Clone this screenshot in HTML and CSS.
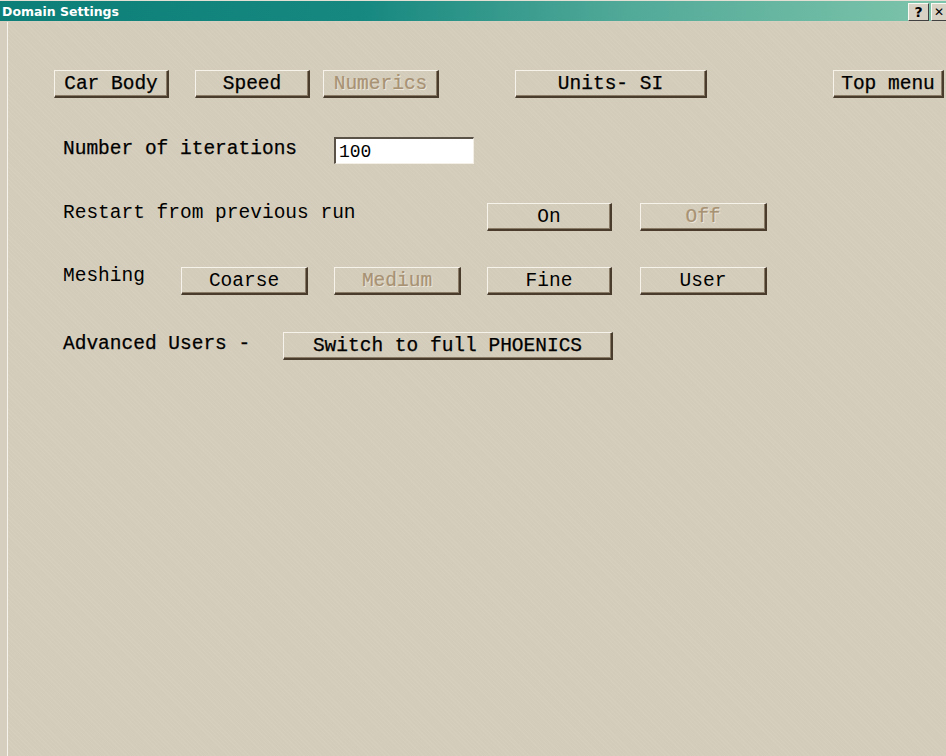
FILE: index.html
```html
<!DOCTYPE html>
<html lang="en">
<head>
<meta charset="utf-8">
<title>Domain Settings</title>
<link rel="stylesheet" href="styles.css">
</head>
<body>
<div class="window">
  <div class="titlebar">
    <span class="title">Domain Settings</span>
    <div class="caption-buttons">
      <span class="cap-btn">?</span>
      <span class="cap-btn cap-close">&#x2715;</span>
    </div>
  </div>
  <div class="client">
    <div class="row row-nav">
      <button class="btn w-car">Car Body</button>
      <button class="btn w-speed">Speed</button>
      <button class="btn w-num" disabled>Numerics</button>
      <button class="btn w-units">Units- SI</button>
      <button class="btn w-top">Top menu</button>
    </div>

    <div class="row row-iter">
      <span class="label l-iter">Number of iterations</span>
      <input class="field" type="text" value="100">
    </div>

    <div class="row row-restart">
      <span class="label light l-restart">Restart from previous run</span>
      <button class="btn light w-on">On</button>
      <button class="btn light w-off" disabled>Off</button>
    </div>

    <div class="row row-mesh">
      <span class="label light l-mesh">Meshing</span>
      <button class="btn light w-coarse">Coarse</button>
      <button class="btn light w-medium" disabled>Medium</button>
      <button class="btn light w-fine">Fine</button>
      <button class="btn light w-user">User</button>
    </div>

    <div class="row row-adv">
      <span class="label l-adv">Advanced Users -</span>
      <button class="btn w-switch">Switch to full PHOENICS</button>
    </div>
  </div>
</div>
</body>
</html>
```

FILE: styles.css
```css
* { box-sizing: border-box; }

html, body {
  margin: 0;
  padding: 0;
  width: 946px;
  height: 756px;
  overflow: hidden;
  background: #d4ccba;
}

.window {
  display: flex;
  flex-direction: column;
  width: 946px;
  height: 756px;
}

/* caption bar */
.titlebar {
  flex: 0 0 22px;
  display: flex;
  align-items: center;
  justify-content: space-between;
  border-top: 1px solid #e4dfd4;
  border-bottom: 1px solid #d6cfbf;
  padding-left: 2px;
  background: linear-gradient(to right, #0c7f78 0%, #168880 38%, #4fa897 65%, #7fc5ab 100%);
}

.title {
  font-family: "DejaVu Sans", "Liberation Sans", sans-serif;
  font-weight: bold;
  font-size: 12.5px;
  color: #ffffff;
}

.caption-buttons {
  display: flex;
  gap: 2px;
  align-self: flex-start;
  margin-top: 2px;
}

.cap-btn {
  flex: 0 0 auto;
  width: 21px;
  height: 18px;
  display: flex;
  align-items: center;
  justify-content: center;
  background: #d8d2c4;
  border-top: 1px solid #fbf9f4;
  border-left: 1px solid #fbf9f4;
  border-right: 1px solid #404040;
  border-bottom: 1px solid #404040;
  font-family: "DejaVu Sans", sans-serif;
  font-weight: bold;
  font-size: 14px;
  color: #000;
}

.cap-close {
  width: 15px;
  font-size: 12px;
  justify-content: flex-start;
  padding-left: 2px;
  border-right: none;
}

/* dialog surface */
.client {
  flex: 1;
  display: flex;
  flex-direction: column;
  padding: 48px 0 0 47px;
  border-left: 7px solid #d6cfbf;
  box-shadow: inset 1px 0 0 #f6f3ec;
  background-color: #d4ccba;
  background-image: repeating-linear-gradient(45deg, rgba(255,255,255,0.05) 0 1px, rgba(0,0,0,0) 1px 3px);
  font-family: "Liberation Mono", "DejaVu Sans Mono", monospace;
  font-size: 19.5px;
  color: #000;
}

.row {
  display: flex;
  align-items: flex-start;
}

.row-iter { margin-top: 39px; }
.row-restart { margin-top: 39px; }
.row-mesh { margin-top: 36px; }
.row-adv { margin-top: 37px; }

.label {
  margin-left: 9px;
  white-space: pre;
  line-height: 24px;
  -webkit-text-stroke: 0.25px #000;
}

.label.light { -webkit-text-stroke: 0; }

.l-iter { width: 271px; }
.l-restart { width: 424px; margin-top: -2px; }
.l-mesh { width: 118px; margin-top: -3px; }
.l-adv { width: 220px; }

.btn {
  height: 28px;
  margin: 0;
  padding: 2px 0 0;
  display: flex;
  align-items: center;
  justify-content: center;
  font: inherit;
  color: #000;
  -webkit-text-stroke: 0.25px #000;
  background: transparent;
  border-style: solid;
  border-width: 1px 2px 2px 1px;
  border-color: #f7f3ea #4a3c2d #4a3c2d #f7f3ea;
  box-shadow: inset -1px -1px 0 #8a7b66;
  white-space: pre;
  line-height: 1;
}

.btn.light { -webkit-text-stroke: 0; }

.btn:disabled {
  color: #a89274;
  -webkit-text-stroke: 0.2px #a89274;
  text-shadow: 1px 1px 0 #ece6da;
}

/* nav row button sizes and spacing */
.w-car { width: 115px; }
.w-speed { width: 115px; margin-left: 26px; }
.w-num { width: 116px; margin-left: 13px; }
.w-units { width: 192px; margin-left: 76px; }
.w-top { width: 111px; margin-left: 126px; }

.w-on { width: 125px; }
.w-off { width: 127px; margin-left: 28px; }

.w-coarse { width: 127px; }
.w-medium { width: 127px; margin-left: 26px; }
.w-fine { width: 125px; margin-left: 26px; }
.w-user { width: 127px; margin-left: 28px; }

.w-switch { width: 330px; }

.field {
  width: 140px;
  height: 27px;
  margin: 0;
  padding: 2px 0 0 3px;
  font: inherit;
  font-size: 18px;
  color: #000;
  background: #ffffff;
  border-style: solid;
  border-width: 2px 1px 1px 2px;
  border-color: #5a5247 #f4f0e8 #f4f0e8 #5a5247;
  outline: none;
}
```
